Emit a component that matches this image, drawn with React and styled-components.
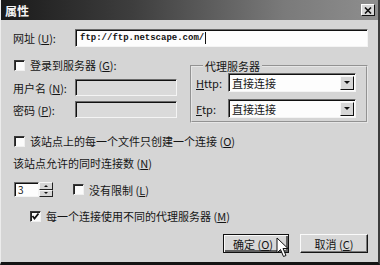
import React from 'react'
import styled, { createGlobalStyle } from 'styled-components'

const GlobalStyle = createGlobalStyle`
  html, body { margin: 0; padding: 0; background: #d5d5d5; }
  body {
    font-family: "Noto Sans CJK SC", "Noto Sans", sans-serif;
    font-size: 11px;
    color: #151515;
  }
`

const Window = styled.div`
  position: relative;
  width: 380px;
  height: 265px;
  box-sizing: border-box;
  background: #d5d5d5;
  border-left: 1px solid #ececec;
  border-right: 2px solid #3c3c3c;
  border-bottom: 3px solid #141414;
  display: flex;
  flex-direction: column;
  overflow: hidden;
`

const TitleBar = styled.div`
  height: 20px;
  flex-shrink: 0;
  display: flex;
  align-items: center;
  justify-content: space-between;
  padding: 0 3px 0 4px;
  background: linear-gradient(90deg, #1a1a1a 0%, #3e3e3e 35%, #7a7a7a 75%, #8e8e8e 100%);
  color: #f4f4f4;
  font-size: 12px;
  font-weight: bold;
`

const CloseBtn = styled.div`
  width: 14px;
  height: 12px;
  box-sizing: border-box;
  background: #d8d8d8;
  border: 1px solid;
  border-color: #fff #111 #111 #fff;
  display: flex;
  align-items: center;
  justify-content: center;
`

const Body = styled.div`
  flex: 1;
  padding: 9px 10px 0 12px;
  display: flex;
  flex-direction: column;
`

const Row = styled.div`
  display: flex;
  align-items: center;
  height: ${p => p.h || 14}px;
  margin-top: ${p => p.mt || 0}px;
  margin-left: ${p => p.ml || 0}px;
  white-space: nowrap;
`

const Label = styled.span`
  display: inline-block;
  width: ${p => p.w}px;
  flex-shrink: 0;
`

const Spacer = styled.span`
  width: ${p => p.w}px;
  flex-shrink: 0;
`

const TextBox = styled.div`
  box-sizing: border-box;
  height: ${p => p.h || 18}px;
  width: ${p => (p.w ? p.w + 'px' : 'auto')};
  flex: ${p => (p.w ? 'none' : 1)};
  background: ${p => (p.disabled ? '#dadada' : '#fdfdfd')};
  border: 1px solid;
  border-color: #6a6a6a #f4f4f4 #f4f4f4 #6a6a6a;
  box-shadow: inset 1px 1px #111;
  display: flex;
  align-items: center;
  padding-left: 4px;
`

const UrlText = styled.span`
  font-family: "Liberation Mono", "DejaVu Sans Mono", monospace;
  font-size: 9px;
  font-weight: bold;
  color: #111;
`

const Caret = styled.span`
  display: inline-block;
  width: 1px;
  height: 12px;
  background: #111;
  margin-left: 1px;
`

const Middle = styled.div`
  display: flex;
  margin-top: 11px;
  gap: 13px;
`

const LeftCol = styled.div`
  width: 164px;
  display: flex;
  flex-direction: column;
`

const Box = styled.span`
  width: 11px;
  height: 11px;
  box-sizing: border-box;
  flex-shrink: 0;
  background: #fbfbfb;
  border: 1px solid;
  border-color: #3a3a3a #f0f0f0 #f0f0f0 #3a3a3a;
  box-shadow: inset 1px 1px #222;
  margin: 0 5px 0 1px;
  display: flex;
  align-items: center;
  justify-content: center;
`

const Group = styled.fieldset`
  flex: 1;
  margin: 1px 0 0;
  padding: 0 8px 3px 4px;
  border: 2px groove #e6e6e6;
  min-width: 0;
`

const Legend = styled.legend`
  padding: 0 2px;
  margin-left: 7px;
  font-size: 11px;
  line-height: 14px;
`

const Select = styled(TextBox)`
  padding-left: 3px;
  padding-right: 1px;
  justify-content: space-between;
`

const DropBtn = styled.span`
  width: 14px;
  height: 14px;
  box-sizing: border-box;
  background: #d6d6d6;
  border: 1px solid;
  border-color: #f6f6f6 #111 #111 #f6f6f6;
  display: flex;
  align-items: center;
  justify-content: center;
`

const Arrow = styled.span`
  width: 0;
  height: 0;
  border-left: ${p => p.s || 3}px solid transparent;
  border-right: ${p => p.s || 3}px solid transparent;
  border-${p => (p.up ? 'bottom' : 'top')}: ${p => p.s || 3}px solid #111;
`

const Spinner = styled.div`
  display: flex;
  height: 15px;
  width: 39px;
  margin-left: 1px;
`

const SpinField = styled(TextBox)`
  height: 15px;
  padding-left: 3px;
  font-size: 10px;
`

const SpinBtns = styled.div`
  width: 14px;
  display: flex;
  flex-direction: column;
`

const SpinHalf = styled.span`
  flex: 1;
  background: #d6d6d6;
  border: 1px solid;
  border-color: #f6f6f6 #222 #222 #f6f6f6;
  display: flex;
  align-items: center;
  justify-content: center;
`

const Buttons = styled.div`
  display: flex;
  justify-content: flex-end;
  gap: 11px;
  margin-top: 11px;
`

const Button = styled.div`
  width: ${p => p.w}px;
  height: 19px;
  box-sizing: border-box;
  background: #d8d8d8;
  border: 1px solid;
  border-color: ${p => (p.primary ? '#111' : '#fafafa #151515 #151515 #fafafa')};
  box-shadow: ${p =>
    p.primary
      ? 'inset 1px 1px #fafafa, inset -2px -2px #606060'
      : 'inset -1px -1px #7a7a7a'};
  display: flex;
  align-items: center;
  justify-content: center;
  padding-right: ${p => (p.primary ? 6 : 0)}px;
`

const Cursor = styled.svg`
  position: absolute;
  left: 275px;
  top: 237px;
`

function Check({ checked }) {
  return (
    <Box>
      {checked && (
        <svg width="9" height="9" viewBox="0 0 9 9">
          <path d="M1.5 4 L3.5 6.5 L7.5 1.5" stroke="#111" strokeWidth="1.8" fill="none" />
        </svg>
      )}
    </Box>
  )
}

function Combo({ value }) {
  return (
    <Select w={128} h={19}>
      <span>{value}</span>
      <DropBtn>
        <Arrow />
      </DropBtn>
    </Select>
  )
}

export default function App() {
  return (
    <>
      <GlobalStyle />
      <Window>
        <TitleBar>
          <span>属性</span>
          <CloseBtn>
            <svg width="8" height="7" viewBox="0 0 8 7">
              <path d="M1 0.5 L7 6.5 M7 0.5 L1 6.5" stroke="#111" strokeWidth="1.6" />
            </svg>
          </CloseBtn>
        </TitleBar>
        <Body>
          <Row h={18}>
            <Label w={62}>网址 (<u>U</u>):</Label>
            <TextBox h={18}>
              <UrlText>ftp://ftp.netscape.com/</UrlText>
              <Caret />
            </TextBox>
          </Row>

          <Middle>
            <LeftCol>
              <Row>
                <Check />
                <span>登录到服务器 (<u>G</u>):</span>
              </Row>
              <Row h={17} mt={7}>
                <Label w={62}>用户名 (<u>N</u>):</Label>
                <TextBox w={102} h={17} disabled />
              </Row>
              <Row h={17} mt={5}>
                <Label w={62}>密码 (<u>P</u>):</Label>
                <TextBox w={102} h={17} disabled />
              </Row>
            </LeftCol>
            <Group>
              <Legend>代理服务器</Legend>
              <Row h={19}>
                <Label w={32}><u>H</u>ttp:</Label>
                <Combo value="直接连接" />
              </Row>
              <Row h={19} mt={7}>
                <Label w={32}><u>F</u>tp:</Label>
                <Combo value="直接连接" />
              </Row>
            </Group>
          </Middle>

          <Row mt={11}>
            <Check />
            <span>该站点上的每一个文件只创建一个连接 (<u>O</u>)</span>
          </Row>
          <Row mt={8}>
            <span>该站点允许的同时连接数 (<u>N</u>)</span>
          </Row>
          <Row h={15} mt={12}>
            <Spinner>
              <SpinField>3</SpinField>
              <SpinBtns>
                <SpinHalf><Arrow up s={2} /></SpinHalf>
                <SpinHalf><Arrow s={2} /></SpinHalf>
              </SpinBtns>
            </Spinner>
            <Spacer w={19} />
            <Check />
            <span>没有限制 (<u>L</u>)</span>
          </Row>
          <Row mt={12} ml={16}>
            <Check checked />
            <span>每一个连接使用不同的代理服务器 (<u>M</u>)</span>
          </Row>

          <Buttons>
            <Button w={66} primary>确定 (<u>O</u>)</Button>
            <Button w={68}>取消 (<u>C</u>)</Button>
          </Buttons>
        </Body>
        <Cursor width="13" height="21" viewBox="0 0 13 21">
          <path d="M1 1 L1 16 L4.5 12.5 L7.5 19.5 L10 18.5 L7 11.5 L12 11.5 Z" fill="#fff" stroke="#111" strokeWidth="1" />
        </Cursor>
      </Window>
    </>
  )
}
